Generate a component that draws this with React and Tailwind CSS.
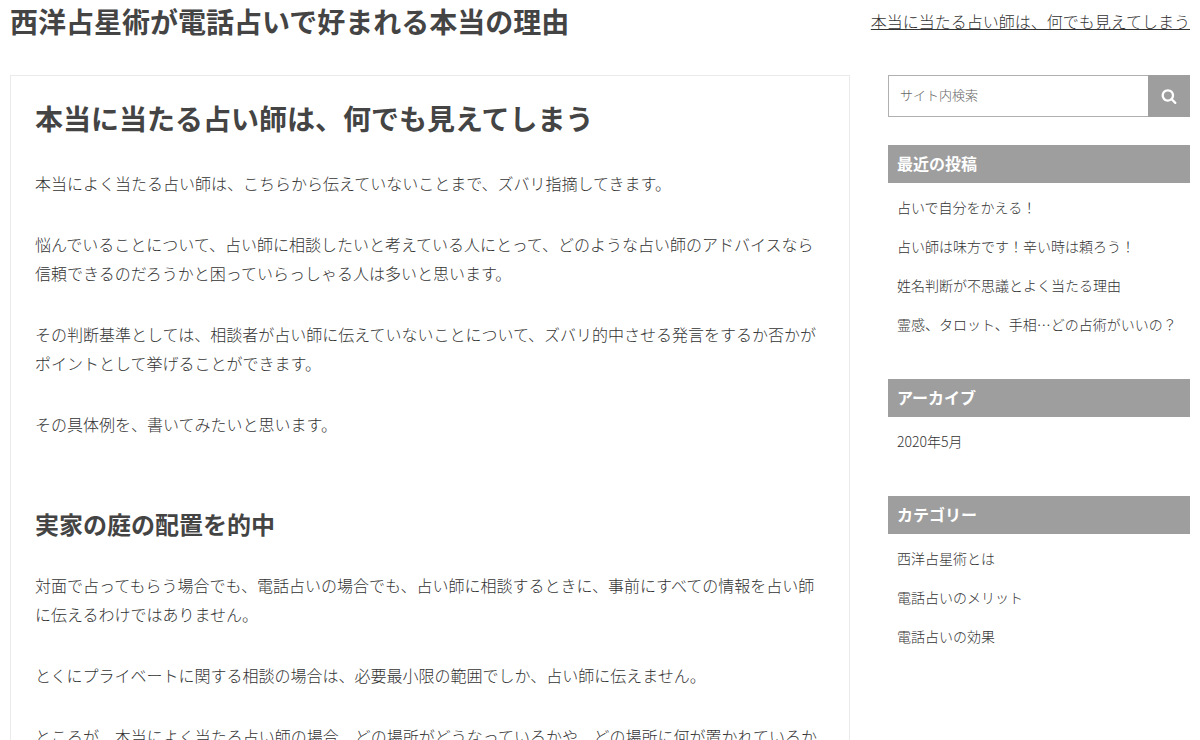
import React from "react";

const paragraphs = [
    "本当によく当たる占い師は、こちらから伝えていないことまで、ズバリ指摘してきます。",
    "悩んでいることについて、占い師に相談したいと考えている人にとって、どのような占い師のアドバイスなら信頼できるのだろうかと困っていらっしゃる人は多いと思います。",
    "その判断基準としては、相談者が占い師に伝えていないことについて、ズバリ的中させる発言をするか否かがポイントとして挙げることができます。",
    "その具体例を、書いてみたいと思います。",
];

const gardenParagraphs = [
    "対面で占ってもらう場合でも、電話占いの場合でも、占い師に相談するときに、事前にすべての情報を占い師に伝えるわけではありません。",
    "とくにプライベートに関する相談の場合は、必要最小限の範囲でしか、占い師に伝えません。",
    "ところが、本当によく当たる占い師の場合、どの場所がどうなっているかや、どの場所に何が置かれているか",
];

const widgets = [
    {
        title: "最近の投稿",
        links: [
            "占いで自分をかえる！",
            "占い師は味方です！辛い時は頼ろう！",
            "姓名判断が不思議とよく当たる理由",
            "霊感、タロット、手相…どの占術がいいの？",
        ],
    },
    { title: "アーカイブ", links: ["2020年5月"] },
    {
        title: "カテゴリー",
        links: ["西洋占星術とは", "電話占いのメリット", "電話占いの効果"],
    },
];

function Header() {
    return (
        <header className="flex items-start justify-between pb-8">
            <a className="text-[28px] leading-[43px] font-bold" href="#">
                西洋占星術が電話占いで好まれる本当の理由
            </a>
            <a className="leading-[43px] font-light text-[#333] underline" href="#">
                本当に当たる占い師は、何でも見えてしまう
            </a>
        </header>
    );
}

function Text({ items }) {
    return (
        <div className="space-y-8 leading-[29px] font-light text-[#333]">
            {items.map((text) => (
                <p key={text}>{text}</p>
            ))}
        </div>
    );
}

function SearchIcon() {
    return (
        <svg className="size-4" viewBox="0 0 1792 1792" fill="currentColor" aria-hidden="true">
            <path d="M1216 832q0-185-131.5-316.5t-316.5-131.5-316.5 131.5-131.5 316.5 131.5 316.5 316.5 131.5 316.5-131.5 131.5-316.5zm512 832q0 52-38 90t-90 38q-54 0-90-38l-343-342q-179 124-399 124-143 0-273.5-55.5t-225-150-150-225-55.5-273.5 55.5-273.5 150-225 225-150 273.5-55.5 273.5 55.5 225 150 150 225 55.5 273.5q0 220-124 399l343 343q37 37 37 90z" />
        </svg>
    );
}

function SearchForm() {
    return (
        <form className="flex h-[42px]" onSubmit={(e) => e.preventDefault()}>
            <input
                className="min-w-0 flex-1 border border-r-0 border-[#b0b0b0] px-[11px] pb-[2px] text-[13px] font-light outline-none placeholder:text-[#666]"
                type="text"
                aria-label="サイト内検索"
                placeholder="サイト内検索"
            />
            <button
                className="flex w-[42px] items-center justify-center bg-[#9e9e9e] text-white"
                type="submit"
                aria-label="検索"
            >
                <SearchIcon />
            </button>
        </form>
    );
}

function Widget({ title, links }) {
    return (
        <section>
            <h3 className="bg-[#9e9e9e] px-[9px] pb-[2px] leading-9 font-bold text-white">{title}</h3>
            <ul className="px-[9px] pt-[5px] text-sm font-light text-[#333]">
                {links.map((link) => (
                    <li key={link} className="leading-[39px] whitespace-nowrap">
                        <a href="#">{link}</a>
                    </li>
                ))}
            </ul>
        </section>
    );
}

function App() {
    return (
        <div className="bg-white px-[10px] font-['Noto_Sans_CJK_JP',sans-serif] text-[#444]" lang="ja">
            <Header />

            <div className="flex items-start gap-[38px]">
                <main className="min-w-0 flex-1 border border-[#eaeaea] px-6 py-[23px]">
                    <h1 className="mb-8 text-[28px] leading-[38px] font-bold">
                        本当に当たる占い師は、何でも見えてしまう
                    </h1>
                    <Text items={paragraphs} />

                    <h2 className="mt-[66px] mb-7 text-2xl leading-[38px] font-bold">
                        実家の庭の配置を的中
                    </h2>
                    <Text items={gardenParagraphs} />
                </main>

                <aside className="w-[302px] shrink-0">
                    <SearchForm />
                    <div className="mt-7 space-y-[35px]">
                        {widgets.map((widget) => (
                            <Widget key={widget.title} title={widget.title} links={widget.links} />
                        ))}
                    </div>
                </aside>
            </div>
        </div>
    );
}

export default App;
